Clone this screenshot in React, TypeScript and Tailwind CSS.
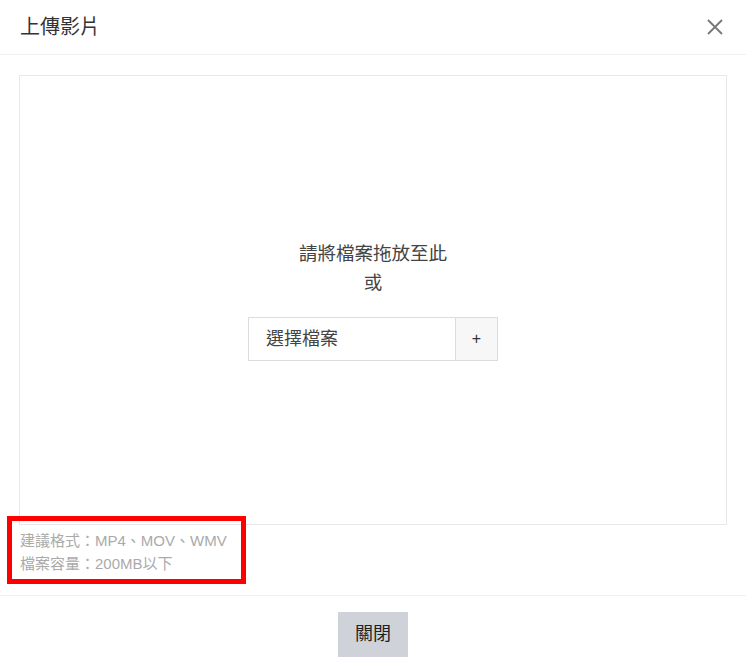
import React from 'react';

const font = { fontFamily: '"Liberation Sans", "Noto Sans CJK TC", sans-serif' };

const UploadVideoModal: React.FC = () => {
  return (
    <div className="relative w-[746px] h-[671px] bg-white" style={font}>
      {/* Header */}
      <div className="h-[55px] flex items-center justify-between pl-[20px] pr-[22px] border-b border-[#f0f0f0]">
        <h2 className="text-[20px] text-[#333] font-normal">上傳影片</h2>
        <button className="text-[#777]" aria-label="Close">
          <svg width="18" height="18" viewBox="0 0 18 18" stroke="currentColor" strokeWidth="1.8" fill="none">
            <path d="M2 2L16 16M16 2L2 16" />
          </svg>
        </button>
      </div>

      {/* Body */}
      <div className="px-[19px] pt-[20px] h-[541px] border-b border-[#f0f0f0]">
        <div className="h-[450px] border border-[#e8e8e8] flex flex-col items-center justify-center">
          <p className="text-[18.5px] leading-[29px] text-[#444]">請將檔案拖放至此</p>
          <p className="text-[18.5px] leading-[29px] text-[#444]">或</p>
          <div className="mt-[20px] flex h-[44px] w-[250px] border border-[#dcdcdc]">
            <div className="flex-1 flex items-center pl-[17px] text-[18px] text-[#444]">選擇檔案</div>
            <div className="w-[42px] flex items-center justify-center border-l border-[#dcdcdc] bg-[#f7f7f7] text-[16px] text-[#333]">
              +
            </div>
          </div>
        </div>
        <div className="pt-[4px] pl-[1px] text-[15px] leading-[23px] text-[#aaa]">
          <p>建議格式：MP4、MOV、WMV</p>
          <p>檔案容量：200MB以下</p>
        </div>
      </div>

      {/* Footer */}
      <div className="flex justify-center pt-[16px]">
        <button className="w-[70px] h-[45px] bg-[#cfd3d9] text-[18px] text-[#222]">關閉</button>
      </div>

      {/* Annotation highlight */}
      <div className="absolute left-[7px] top-[516px] w-[239px] h-[68px] border-[5px] border-[#ff0000]" />
    </div>
  );
};

export default function App() {
  return <UploadVideoModal />;
}
